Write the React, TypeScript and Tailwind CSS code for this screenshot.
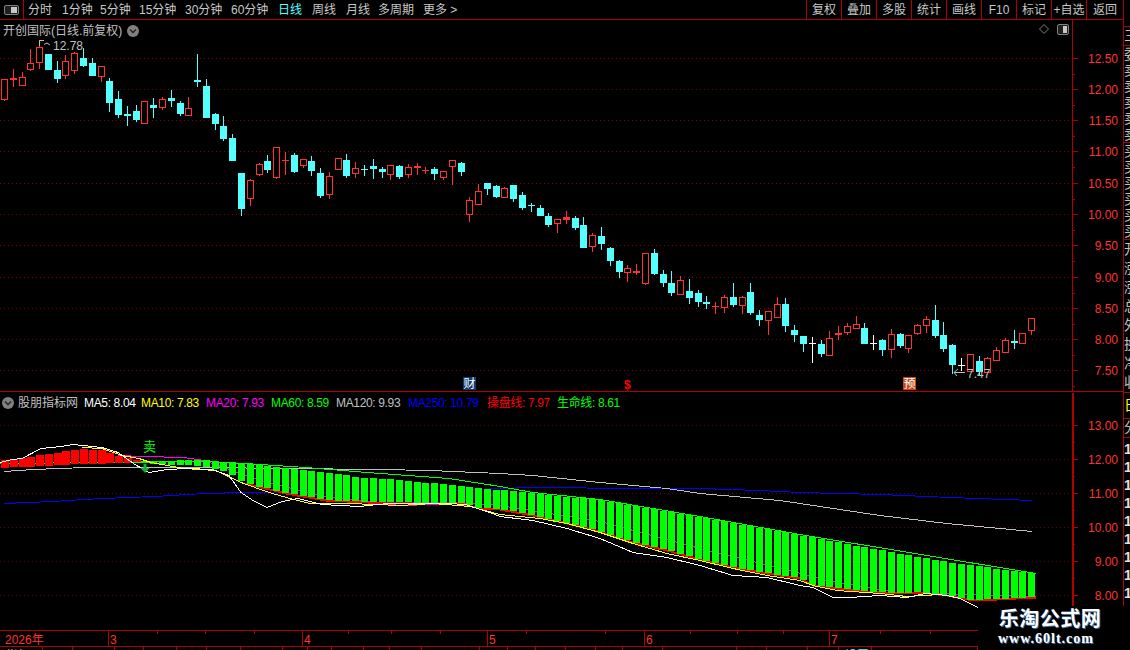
type Candle = [string, number, number, number, number];
type Pt = [number, number];

const RED = '#ff3232';
const CYAN = '#54ffff';

// screen-pixel candles: colour, body top, body bottom, wick high, wick low
const CANDLES: Candle[] = [
  ['r', 79, 99, 79, 101], ['r', 78, 80, 69, 87], ['r', 77, 85, 72, 85], ['r', 63, 69, 49, 71],
  ['r', 47, 62, 40, 69], ['c', 54, 69, 54, 69], ['c', 70, 78, 61, 83], ['r', 61, 75, 55, 79],
  ['r', 53, 70, 52, 74], ['c', 58, 65, 48, 67], ['c', 63, 75, 58, 76], ['r', 66, 76, 66, 82],
  ['c', 81, 102, 78, 112], ['c', 99, 114, 91, 118], ['c', 114, 116, 106, 126], ['c', 111, 119, 105, 122],
  ['r', 101, 123, 101, 123], ['c', 105, 108, 98, 118], ['r', 99, 107, 97, 110], ['c', 98, 101, 90, 107],
  ['c', 103, 113, 101, 116], ['r', 108, 115, 97, 116], ['c', 80, 82, 54, 87], ['c', 86, 117, 79, 118],
  ['c', 114, 123, 113, 130], ['c', 126, 138, 116, 141], ['c', 138, 160, 134, 160], ['c', 173, 208, 173, 216],
  ['r', 180, 198, 179, 206], ['r', 164, 174, 163, 176], ['c', 161, 169, 155, 173], ['r', 147, 177, 147, 179],
  ['r', 160, 161, 152, 175], ['c', 155, 171, 153, 173], ['r', 159, 165, 159, 168], ['c', 161, 170, 156, 176],
  ['c', 173, 195, 168, 198], ['r', 176, 194, 172, 199], ['r', 158, 169, 158, 169], ['c', 160, 175, 154, 178],
  ['r', 168, 173, 162, 178], ['c', 169, 170, 165, 176], ['c', 166, 169, 159, 179], ['c', 169, 172, 167, 178],
  ['r', 165, 174, 165, 180], ['c', 166, 176, 165, 179], ['r', 167, 174, 164, 178], ['r', 166, 168, 163, 175],
  ['r', 170, 171, 167, 174], ['c', 169, 173, 167, 180], ['r', 171, 177, 171, 180], ['r', 160, 166, 160, 185],
  ['c', 163, 171, 162, 176], ['r', 200, 214, 197, 222], ['r', 191, 204, 184, 204], ['c', 183, 188, 183, 195],
  ['c', 186, 196, 185, 198], ['r', 188, 197, 187, 197], ['c', 185, 198, 185, 202], ['c', 195, 207, 192, 210],
  ['c', 205, 206, 203, 212], ['c', 208, 215, 205, 215], ['c', 216, 224, 213, 227], ['r', 219, 223, 219, 233],
  ['r', 217, 220, 211, 224], ['c', 218, 227, 216, 230], ['c', 225, 247, 217, 248], ['r', 235, 246, 233, 252],
  ['c', 236, 243, 227, 250], ['c', 248, 260, 247, 266], ['c', 261, 271, 260, 278], ['r', 268, 272, 265, 282],
  ['r', 271, 273, 264, 275], ['r', 253, 283, 253, 285], ['c', 253, 273, 249, 275], ['c', 274, 282, 270, 287],
  ['c', 283, 292, 271, 296], ['r', 280, 294, 276, 295], ['c', 291, 297, 279, 304], ['c', 293, 301, 290, 307],
  ['c', 302, 304, 296, 309], ['r', 306, 307, 302, 314], ['r', 297, 307, 295, 313], ['c', 297, 304, 283, 307],
  ['r', 297, 305, 296, 314], ['c', 292, 312, 283, 315], ['c', 315, 319, 310, 326], ['r', 311, 320, 311, 335],
  ['r', 304, 317, 297, 317], ['c', 304, 325, 298, 332], ['c', 330, 334, 325, 342], ['c', 336, 343, 336, 352],
  ['w', 343, 344, 337, 363], ['c', 344, 353, 340, 357], ['r', 338, 355, 331, 355], ['r', 333, 335, 326, 340],
  ['r', 326, 332, 323, 335], ['r', 324, 328, 316, 328], ['c', 328, 343, 323, 344], ['w', 343, 344, 335, 350],
  ['c', 340, 349, 339, 356], ['r', 334, 349, 329, 358], ['c', 334, 345, 333, 348], ['r', 335, 348, 335, 353],
  ['r', 325, 333, 324, 335], ['r', 319, 325, 316, 333], ['c', 320, 335, 305, 338], ['c', 335, 348, 322, 352],
  ['c', 345, 364, 344, 374], ['w', 365, 366, 358, 371], ['r', 354, 371, 354, 371], ['c', 361, 371, 356, 375],
  ['r', 358, 372, 357, 372], ['r', 350, 360, 347, 360], ['r', 340, 352, 338, 352], ['c', 341, 343, 330, 349],
  ['r', 333, 343, 333, 343], ['r', 318, 330, 318, 335],
];

const MAIN_GRID: [number, string][] = [
  [58, '12.50'], [89, '12.00'], [120, '11.50'], [151, '11.00'], [183, '10.50'], [214, '10.00'],
  [245, '9.50'], [277, '9.00'], [308, '8.50'], [339, '8.00'], [370, '7.50'],
];
const SUB_GRID: [number, string][] = [
  [425, '13.00'], [459, '12.00'], [493, '11.00'], [527, '10.00'], [561, '9.00'], [595, '8.00'],
];

const RED_TOP: Pt[] = [[0, 461], [41, 455], [82, 449], [102, 450], [122, 457], [139, 461]];
const RED_BOT: Pt[] = [[0, 468], [41, 466], [82, 464], [122, 463], [139, 462]];
const GREEN_TOP: Pt[] = [
  [139, 461], [204, 460], [229, 462], [286, 468], [367, 478], [400, 480], [500, 490], [600, 500],
  [700, 517], [800, 535], [880, 550], [947, 562], [1036, 574],
];
const GREEN_BOT: Pt[] = [
  [139, 463], [204, 466], [229, 473], [245, 483], [286, 493], [326, 500], [367, 502], [460, 503], [480, 508],
  [500, 509], [533, 515], [567, 523], [600, 531], [633, 542], [667, 550], [700, 559], [733, 567], [767, 573],
  [800, 578], [813, 585], [837, 588], [863, 591], [897, 593], [920, 592], [947, 595], [973, 600], [997, 599], [1036, 597],
];
const MA5: Pt[] = [
  [0, 462], [12, 459], [22, 458], [41, 448], [61, 446], [73, 444], [102, 447], [118, 452], [135, 464], [149, 472],
  [167, 469], [188, 468], [212, 469], [229, 475], [241, 492], [253, 500], [267, 507], [282, 501], [298, 498],
  [322, 504], [359, 506], [388, 503], [449, 503], [465, 504], [490, 512], [500, 516], [533, 520], [567, 528],
  [600, 538], [633, 552], [667, 557], [700, 565], [733, 575], [767, 577], [800, 585], [813, 587], [833, 597],
  [850, 597], [880, 595], [907, 597], [925, 593], [947, 595], [960, 598], [978, 607],
];
const MA10: Pt[] = [
  [82, 447], [102, 448], [122, 455], [139, 458], [151, 462], [184, 468], [216, 470], [241, 482], [269, 492],
  [290, 498], [310, 503], [347, 503], [376, 504], [400, 505], [433, 503], [470, 506], [500, 514], [540, 518],
  [567, 523], [600, 532], [633, 543], [667, 553], [700, 560], [733, 568], [767, 575], [800, 580], [813, 585],
  [837, 590], [880, 593], [907, 596], [940, 594],
];
const MA20: Pt[] = [
  [118, 455], [143, 456], [184, 457], [204, 460], [260, 480], [320, 495], [400, 505], [470, 503], [500, 505],
  [600, 521], [700, 548], [790, 570], [827, 580], [897, 592], [1036, 596],
];
const MA60: Pt[] = [
  [0, 463], [100, 462], [204, 461], [245, 463], [306, 467], [367, 472], [449, 478], [500, 486], [533, 492],
  [600, 499], [700, 516], [800, 534], [1036, 573],
];
const MA120: Pt[] = [
  [4, 471], [33, 469], [86, 467], [204, 467], [286, 468], [380, 469], [430, 470], [500, 473], [533, 475],
  [600, 482], [667, 488], [700, 493], [780, 500], [880, 515], [947, 523], [1032, 531],
];
const MA250: Pt[] = [
  [4, 503], [53, 501], [102, 498], [155, 496], [204, 493], [245, 492], [326, 492], [449, 490], [530, 487],
  [640, 488], [700, 488], [760, 490], [800, 492], [880, 494], [950, 497], [1032, 500],
];

const LEGEND: [string, string][] = [
  ['MA5: 8.04', 'w-[57px] text-white'],
  ['MA10: 7.83', 'w-[65px] text-[#ffff00]'],
  ['MA20: 7.93', 'w-[65px] text-[#ff00ff]'],
  ['MA60: 8.59', 'w-[65px] text-[#00ff00]'],
  ['MA120: 9.93', 'w-[72px] text-[#c0c0c0]'],
  ['MA250: 10.79', 'w-[79px] text-[#0000ff]'],
  ['操盘线: 7.97', 'w-[70px] text-[#ff0000]'],
  ['生命线: 8.61', 'w-[65px] text-[#00ff00]'],
];

const PERIODS: [string, string][] = [
  ['分时', 'w-[34px]'], ['1分钟', 'w-[38px]'], ['5分钟', 'w-[39px]'], ['15分钟', 'w-[46px]'],
  ['30分钟', 'w-[46px]'], ['60分钟', 'w-[47px]'], ['日线', 'w-[34px] text-[#54ffff]'], ['周线', 'w-[34px]'],
  ['月线', 'w-[32px]'], ['多周期', 'w-[45px]'], ['更多 >', 'w-[34px]'],
];
const ACTIONS = ['复权', '叠加', '多股', '统计', '画线', 'F10', '标记', '+自选'];

const MONTHS: [number, string][] = [[108, '3'], [302, '4'], [487, '5'], [644, '6'], [829, '7']];
const TIME_TICKS = [157, 205, 254, 348, 391, 440, 526, 605, 690, 737, 783, 880, 930];
const TABS = [43, 30, 42, 29, 33, 30, 34, 42, 25, 24, 32, 26, 32, 58, 28, 28, 30, 30, 27, 40, 74, 30, 41, 31, 33, 106];

function candleX(i: number) {
  return Math.floor(4.5 + i * 8.78) + 0.5;
}

function valueAt(pts: Pt[], x: number) {
  if (x <= pts[0][0]) return pts[0][1];
  for (let i = 1; i < pts.length; i++) {
    if (x <= pts[i][0]) {
      const [x0, y0] = pts[i - 1];
      const [x1, y1] = pts[i];
      return y0 + ((x - x0) / (x1 - x0)) * (y1 - y0);
    }
  }
  return pts[pts.length - 1][1];
}

function Line({ pts, color, width = 1 }: { pts: Pt[]; color: string; width?: number }) {
  return <polyline points={pts.map(([x, y]) => `${x},${y + 0.5}`).join(' ')} fill="none" stroke={color} strokeWidth={width} />;
}

function CandleMark({ c, i }: { c: Candle; i: number }) {
  const [kind, top, bot, hi, lo] = c;
  const x = candleX(i);
  const color = kind === 'r' ? RED : kind === 'c' ? CYAN : '#ffffff';
  const flat = bot - top <= 3;
  return (
    <g shapeRendering="crispEdges">
      <line x1={x} x2={x} y1={hi} y2={top} stroke={color} />
      <line x1={x} x2={x} y1={bot} y2={lo} stroke={color} />
      {kind === 'r' && !flat ? (
        <rect x={x - 3} y={top + 0.5} width={6} height={bot - top} fill="#000" stroke={color} />
      ) : (
        <rect x={x - 3.5} y={top} width={7} height={Math.max(bot - top, 1) + (flat ? 0 : 1)} fill={color} />
      )}
    </g>
  );
}

function MainChart() {
  return (
    <svg width={1072} height={371} viewBox="0 20 1072 371" className="block">
      {MAIN_GRID.map(([y]) => (
        <line key={y} x1={0} x2={1072} y1={y + 0.5} y2={y + 0.5} stroke="#800000" strokeDasharray="1 3" shapeRendering="crispEdges" />
      ))}
      {CANDLES.map((c, i) => <CandleMark key={i} c={c} i={i} />)}

      <path d="M39.5 46V40.5H44M44 44.5L47 43L50 45" fill="none" stroke="#c0c0c0" />
      <text x={53} y={50} fontSize={12} fill="#c0c0c0">12.78</text>

      <path d="M965 372.5H954M958 369L954 372.5L957 376" fill="none" stroke="#c0c0c0" />
      <text x={967} y={378} fontSize={12} fill="#c0c0c0">7.47</text>

      <rect x={463} y={377} width={13} height={13} fill="#0c3c70" />
      <text x={463.5} y={388} fontSize={12} fill="#fff">财</text>
      <text x={624} y={389} fontSize={12} fontWeight={700} fill="#ff0000">$</text>
      <rect x={903} y={377} width={13} height={13} fill="#c04a12" />
      <text x={903.5} y={388} fontSize={12} fill="#fff">预</text>
    </svg>
  );
}

function SubChart() {
  return (
    <svg width={1072} height={237} viewBox="0 393 1072 237" className="block">
      {SUB_GRID.map(([y]) => (
        <line key={y} x1={0} x2={1072} y1={y + 0.5} y2={y + 0.5} stroke="#700000" strokeDasharray="1 3" shapeRendering="crispEdges" />
      ))}
      <g shapeRendering="crispEdges">
        <Line pts={MA250} color="#0000ff" />
        <Line pts={MA120} color="#c0c0c0" />
        <Line pts={MA20} color="#ff00ff" />
        <Line pts={MA60} color="#00ff00" />
        <Line pts={GREEN_BOT.filter((p) => p[0] > 230)} color="#ff0000" width={2} />
      </g>
      <g shapeRendering="crispEdges">
        {CANDLES.map((_, i) => {
          const cx = candleX(i);
          const isRed = cx < 139;
          const top = Math.round(valueAt(isRed ? RED_TOP : GREEN_TOP, cx));
          const bot = Math.round(valueAt(isRed ? RED_BOT : GREEN_BOT, cx));
          return <rect key={i} x={cx - 3.5} y={top} width={isRed ? 8 : 7} height={bot - top} fill={isRed ? '#ff0000' : '#00ff00'} />;
        })}
      </g>
      <g shapeRendering="crispEdges">
        <Line pts={MA10} color="#ffff00" />
        <Line pts={MA5} color="#ffffff" />
      </g>
      <text x={143} y={451} fontSize={13} fill="#00ff00">卖</text>
      <path d="M143.5 464H146.5V468H149.5L145 473L140.5 468H143.5Z" fill="#10b030" />
    </svg>
  );
}

function PriceAxis({ grid, y0, h, thick }: { grid: [number, string][]; y0: number; h: number; thick?: boolean }) {
  const step = (grid[1][0] - grid[0][0]) / 2;
  return (
    <svg width={51} height={h} viewBox={`1072 ${y0} 51 ${h}`} className="block" shapeRendering="crispEdges">
      <rect x={1072} y={y0} width={thick ? 2 : 1} height={h} fill="#b00000" />
      {grid.map(([y, label]) => (
        <g key={label}>
          <line x1={1072} x2={1078} y1={y + 0.5} y2={y + 0.5} stroke="#b00000" />
          {y + step < y0 + h && <line x1={1072} x2={1075} y1={y + step + 0.5} y2={y + step + 0.5} stroke="#b00000" />}
          <text x={1118} y={y + 5} fontSize={12} fill={RED} textAnchor="end" shapeRendering="auto">{label}</text>
        </g>
      ))}
    </svg>
  );
}

function CircleChevron() {
  return (
    <svg width={12} height={12} viewBox="0 0 12 12" className="shrink-0">
      <circle cx={6} cy={6} r={6} fill="#808080" />
      <path d="M3 4.5L6 7.5L9 4.5" fill="none" stroke="#222" strokeWidth={1.4} />
    </svg>
  );
}

function PanelIcon({ w, h, className }: { w: number; h: number; className?: string }) {
  return (
    <svg width={w} height={h} viewBox={`0 0 ${w} ${h}`} className={className}>
      <rect x={0.5} y={0.5} width={w - 1} height={h - 1} rx={1.5} fill="#202020" stroke="#808080" />
      <rect x={Math.floor(w / 2)} y={2} width={Math.ceil(w / 2) - 2} height={h - 4} fill="#c8c8c8" />
    </svg>
  );
}

function SideColumn() {
  const row = 'overflow-hidden whitespace-nowrap border-t border-[#b00000]';
  return (
    <div className="flex h-[600px] w-[7px] flex-col text-[14px] leading-[16px] text-[#c0c0c0]">
      <div className="h-[26px]" />
      <div className={`${row} h-[19px]`}>三</div>
      <div className={`${row} h-[97px]`}>委<br />卖<br />卖<br />卖<br />卖<br />卖</div>
      <div className={`${row} h-[97px]`}>买<br />买<br />买<br />买<br />买<br />买</div>
      <div className={`${row} h-[153px] leading-[19px]`}>开<br />涨<br />涨<br />总<br />外<br />换<br />净<br />收</div>
      <div className={`${row} h-[26px] pt-[4px] text-[#ffff00]`}>日</div>
      <div className={`${row} h-[19px]`}>分</div>
      <div className={`${row} h-[163px] pt-[2px] leading-[18px] font-bold text-[#e0e0e0]`}>1<br />1<br />1<br />1<br />1<br />1<br />1<br />1<br />1</div>
    </div>
  );
}

export default function App() {
  return (
    <div className="relative flex h-[650px] w-[1130px] overflow-hidden bg-black text-[12px] [font-family:'Liberation_Sans','Noto_Sans_CJK_SC',sans-serif]">
      <div className="flex w-[1123px] flex-col">
        {/* top toolbar */}
        <div className="flex h-[20px] shrink-0 items-center border-b border-[#b00000] text-[#c8c8c8]">
          <div className="flex h-full w-[24px] items-center justify-center border-r border-[#b00000]">
            <PanelIcon w={15} h={10} />
          </div>
          <div className="ml-[4px] flex flex-1 whitespace-nowrap">
            {PERIODS.map(([p, cls]) => <span key={p} className={cls}>{p}</span>)}
          </div>
          <div className="flex h-full">
            {ACTIONS.map((a) => (
              <div key={a} className="flex w-[35px] items-center justify-center border-l border-[#b00000] whitespace-nowrap">{a}</div>
            ))}
            <div className="flex w-[37px] items-center justify-center border-l border-[#b00000]">返回</div>
          </div>
        </div>

        {/* price pane */}
        <div className="relative flex h-[371px] shrink-0">
          <div className="absolute top-[2px] left-[3px] flex items-center gap-[5px] text-[#c0c0c0]">
            <span>开创国际(日线.前复权)</span>
            <CircleChevron />
          </div>
          <svg width={10} height={10} viewBox="0 0 10 10" className="absolute top-[4px] left-[1039px]">
            <path d="M5 0.5L9.5 5L5 9.5L0.5 5Z" fill="none" stroke="#808080" />
          </svg>
          <PanelIcon w={12} h={11} className="absolute top-[4px] left-[1057px]" />
          <MainChart />
          <PriceAxis grid={MAIN_GRID} y0={20} h={371} />
        </div>

        <div className="h-[2px] shrink-0 border-t border-[#b00000]" />

        {/* indicator pane */}
        <div className="relative flex h-[237px] shrink-0">
          <div className="absolute top-[1px] left-[2px] flex items-center whitespace-nowrap">
            <CircleChevron />
            <span className="mr-[6px] ml-[4px] text-[#c0c0c0]">股朋指标网</span>
            <div className="flex tracking-[-0.35px]">
              {LEGEND.map(([label, cls]) => <span key={label} className={cls}>{label}</span>)}
            </div>
          </div>
          <SubChart />
          <PriceAxis grid={SUB_GRID} y0={393} h={237} thick />
        </div>

        {/* time axis */}
        <div className="relative h-[17px] shrink-0 border-y border-[#b00000] text-[#ff3232]">
          <span className="absolute top-0 left-[5px]">2026年</span>
          {MONTHS.map(([x, label]) => (
            <span key={x} className="absolute top-0 h-full border-l border-[#b00000] pl-[1px]" style={{ left: x }}>{label}</span>
          ))}
          {TIME_TICKS.map((x) => (
            <span key={x} className="absolute top-0 h-[3px] w-px bg-[#b00000]" style={{ left: x }} />
          ))}
        </div>

        {/* sheet tabs, mostly off screen */}
        <div className="flex h-[3px] overflow-hidden whitespace-nowrap text-[#c8c8c8]">
          {TABS.map((w, i) => (
            <div key={i} className={`shrink-0 border-r border-[#b00000] pl-[6px] ${i === 24 ? 'text-[#54ffff]' : ''}`} style={{ width: w }}>
              {i === 0 ? '指标' : i === 1 ? '日' : i === 24 ? '设置' : ''}
            </div>
          ))}
        </div>
      </div>

      <div className="border-l border-[#b00000]">
        <SideColumn />
      </div>

      {/* site watermark */}
      <div className="absolute top-[606px] left-[978px] flex h-[44px] w-[152px] flex-col items-center bg-black pr-[8px] text-white">
        <span className="pt-[1px] text-[20px] leading-[24px] font-bold tracking-[0.5px] [text-shadow:1px_1px_0_#3a6ea5]">乐淘公式网</span>
        <span className="mr-[8px] text-[14px] leading-[15px] font-bold tracking-[1px] [font-family:'Liberation_Serif',serif] [text-shadow:1px_1px_0_#3a6ea5]">www.60lt.com</span>
      </div>
    </div>
  );
}
